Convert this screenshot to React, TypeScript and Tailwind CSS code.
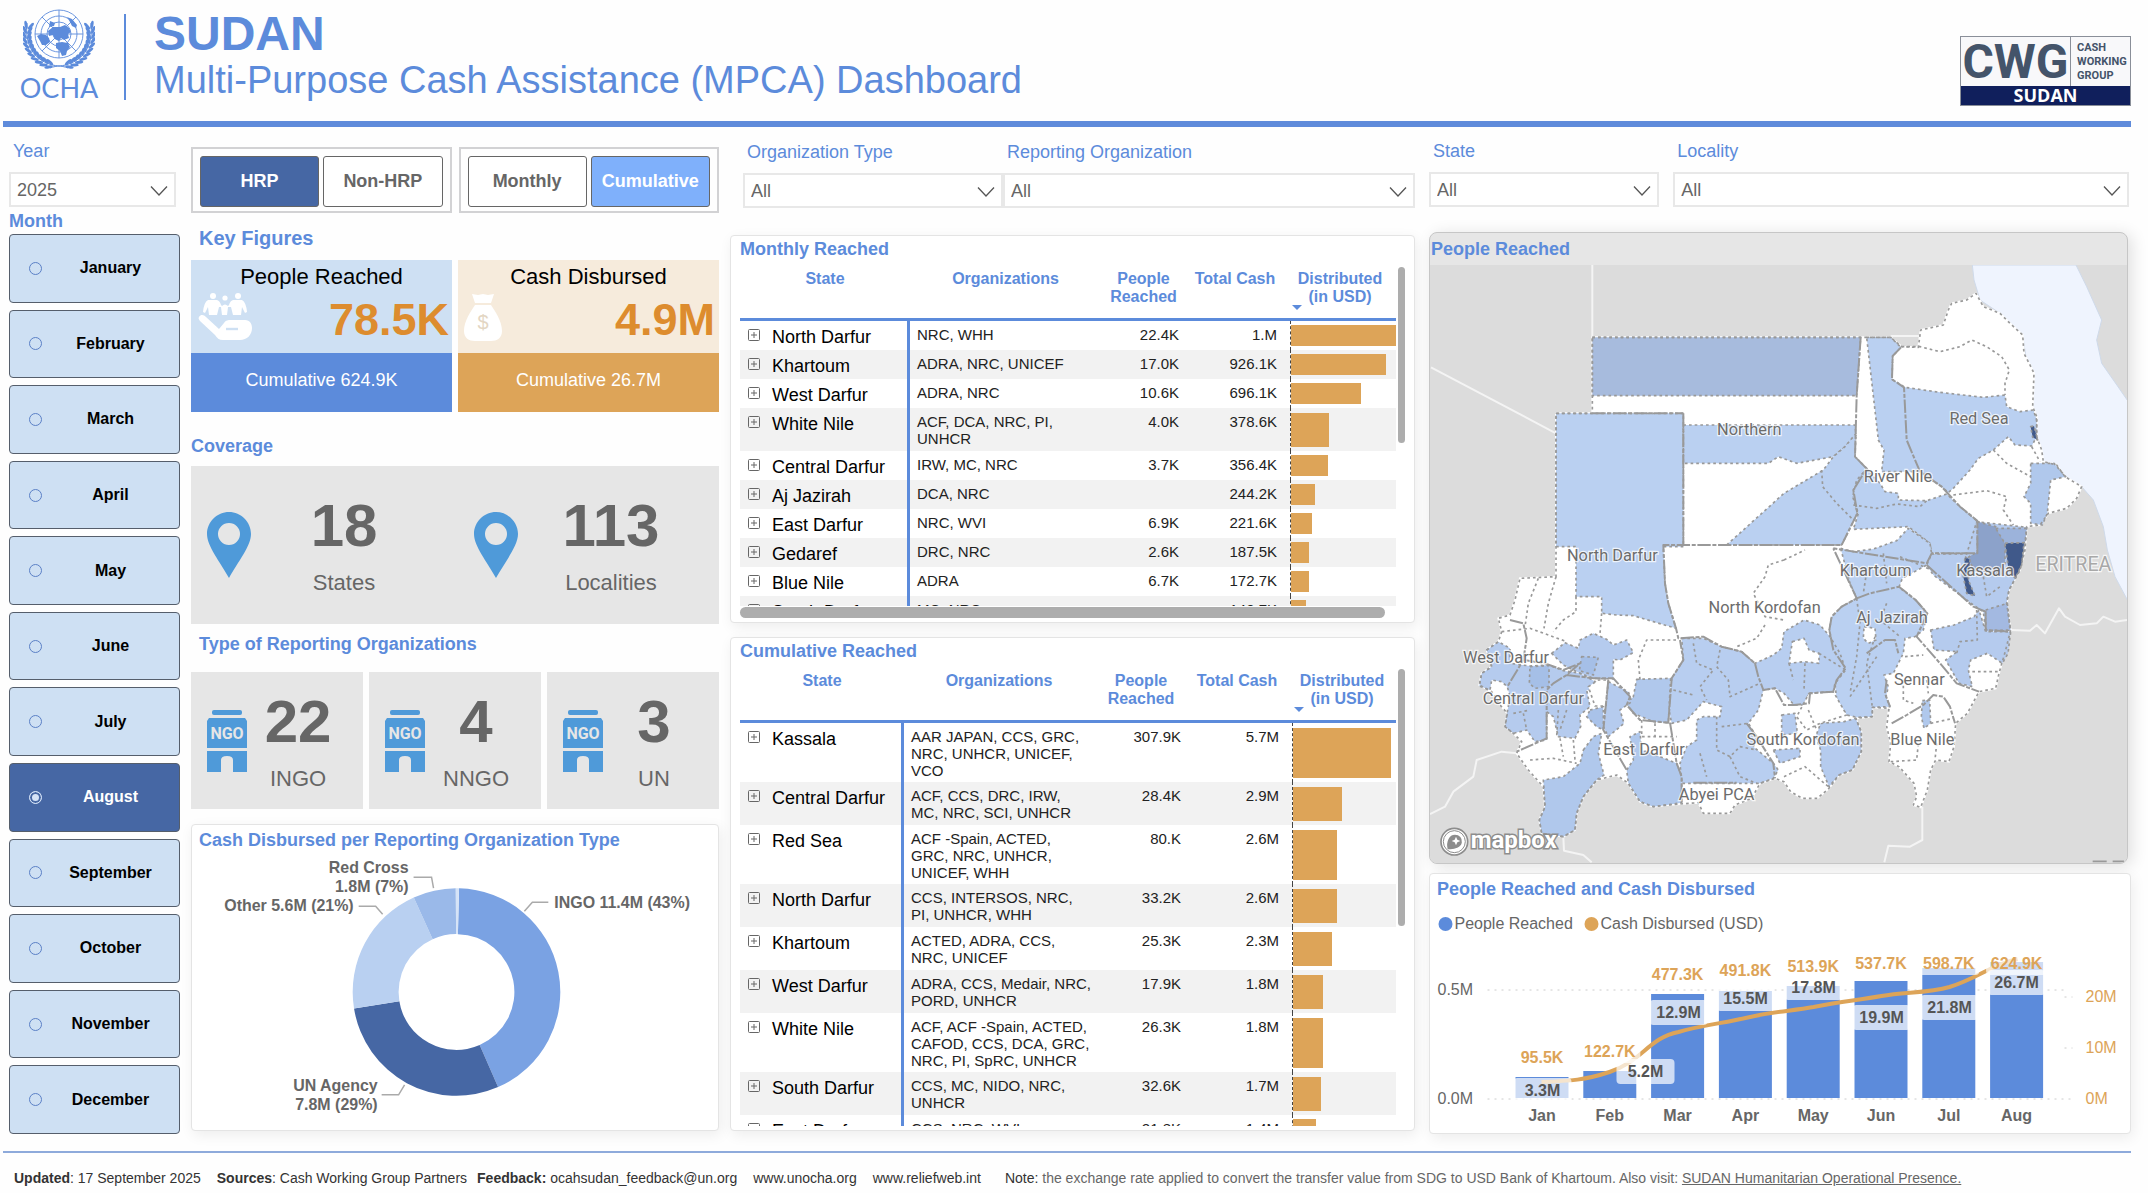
import { useState } from 'react';
import type { ReactNode } from 'react';

const MONTHS = [
    'January', 'February', 'March', 'April', 'May', 'June',
    'July', 'August', 'September', 'October', 'November', 'December',
];

type Row = {
    state: string;
    orgs: string;
    people: string;
    cash: string;
    bar: number;
};

const MONTHLY: Row[] = [
    { state: 'North Darfur', orgs: 'NRC, WHH', people: '22.4K', cash: '1.M', bar: 100 },
    { state: 'Khartoum', orgs: 'ADRA, NRC, UNICEF', people: '17.0K', cash: '926.1K', bar: 90 },
    { state: 'West Darfur', orgs: 'ADRA, NRC', people: '10.6K', cash: '696.1K', bar: 67 },
    { state: 'White Nile', orgs: 'ACF, DCA, NRC, PI,\nUNHCR', people: '4.0K', cash: '378.6K', bar: 36 },
    { state: 'Central Darfur', orgs: 'IRW, MC, NRC', people: '3.7K', cash: '356.4K', bar: 35 },
    { state: 'Aj Jazirah', orgs: 'DCA, NRC', people: '', cash: '244.2K', bar: 23 },
    { state: 'East Darfur', orgs: 'NRC, WVI', people: '6.9K', cash: '221.6K', bar: 20 },
    { state: 'Gedaref', orgs: 'DRC, NRC', people: '2.6K', cash: '187.5K', bar: 17 },
    { state: 'Blue Nile', orgs: 'ADRA', people: '6.7K', cash: '172.7K', bar: 17 },
    { state: 'South Darfur', orgs: 'MC, NRC', people: '', cash: '140.7K', bar: 14 },
];

const CUMULATIVE: Row[] = [
    { state: 'Kassala', orgs: 'AAR JAPAN, CCS, GRC,\nNRC, UNHCR, UNICEF,\nVCO', people: '307.9K', cash: '5.7M', bar: 93 },
    { state: 'Central Darfur', orgs: 'ACF, CCS, DRC, IRW,\nMC, NRC, SCI, UNHCR', people: '28.4K', cash: '2.9M', bar: 47 },
    { state: 'Red Sea', orgs: 'ACF -Spain, ACTED,\nGRC, NRC, UNHCR,\nUNICEF, WHH', people: '80.K', cash: '2.6M', bar: 42 },
    { state: 'North Darfur', orgs: 'CCS, INTERSOS, NRC,\nPI, UNHCR, WHH', people: '33.2K', cash: '2.6M', bar: 42 },
    { state: 'Khartoum', orgs: 'ACTED, ADRA, CCS,\nNRC, UNICEF', people: '25.3K', cash: '2.3M', bar: 37 },
    { state: 'West Darfur', orgs: 'ADRA, CCS, Medair, NRC,\nPORD, UNHCR', people: '17.9K', cash: '1.8M', bar: 29 },
    { state: 'White Nile', orgs: 'ACF, ACF -Spain, ACTED,\nCAFOD, CCS, DCA, GRC,\nNRC, PI, SpRC, UNHCR', people: '26.3K', cash: '1.8M', bar: 29 },
    { state: 'South Darfur', orgs: 'CCS, MC, NIDO, NRC,\nUNHCR', people: '32.6K', cash: '1.7M', bar: 27 },
    { state: 'East Darfur', orgs: 'CCS, NRC, WVI', people: '21.8K', cash: '1.4M', bar: 22 },
];

// Logos

function UnEmblem() {
    const leaves = [];
    for (let i = 0; i < 11; i++) {
        const deg = 108 + i * 9;
        const a = (deg * Math.PI) / 180;
        const x = 36 + 32 * Math.cos(a);
        const y = 26 + 31 * Math.sin(a);
        leaves.push({ x, y, r: deg + 90 });
    }
    const branch = (
        <g>
            <path d="M45 59 C38 56 32 58 24 54 C9 48 2 34 4 14" fill="none" stroke="#5c8bdb" strokeWidth="1" />
            {leaves.map((l) => (
                <g key={l.r} transform={`translate(${l.x} ${l.y}) rotate(${l.r})`}>
                    <ellipse cx="1" cy="-2.4" rx="4.2" ry="1.5" transform="rotate(-28)" fill="#5c8bdb" />
                    <ellipse cx="1" cy="2.2" rx="4.2" ry="1.5" transform="rotate(24)" fill="#5c8bdb" />
                </g>
            ))}
        </g>
    );
    return (
        <svg viewBox="0 0 72 61" className="h-[61px] w-[72px]" aria-hidden="true">
            {branch}
            <g transform="translate(72 0) scale(-1 1)">{branch}</g>
            <circle cx="36" cy="25" r="25" fill="#fff" />
            <g fill="none" stroke="#5c8bdb" strokeWidth=".9">
                <circle cx="36" cy="25" r="24" />
                <circle cx="36" cy="25" r="18" />
                <circle cx="36" cy="25" r="12" />
                <circle cx="36" cy="25" r="6" />
                <path d="M36 1V49M12 25H60M19 8L53 42M53 8L19 42" />
            </g>
            <g fill="#5c8bdb">
                <path d="M25 22l5-4 7 0 5 -2 4 3 2 4-3 2 1 4-5 2-3-2-2 3-4-2-2-4-4 1z" />
                <path d="M44 8l5 2 5 6-1 3-4-2-2-4z" />
                <path d="M14 27l4-2 5 1 3 3 1 4-4 3-4 0-2-4z" />
                <path d="M33 34l6-1 6 1 2 4-3 4-1 4-4 1-2-5-4-3z" />
                <path d="M27 12l5 2-1 3-5 1z" />
            </g>
        </svg>
    );
}

function CwgLogo() {
    return (
        <div className="w-[171px] border border-[#8a8f99] bg-[#f8f8fa] text-[#44546a]">
            <div className="flex h-[49px]">
                <span className="flex w-[110px] shrink-0 items-center justify-center border-r border-[#8a8f99] font-['Roboto',sans-serif] text-[48px] leading-[49px] font-bold">
                    CWG
                </span>
                <span className="flex flex-col justify-center pl-[6px] font-['Roboto',sans-serif] text-[11px] leading-[14px] font-bold">
                    <span>CASH</span>
                    <span>WORKING</span>
                    <span>GROUP</span>
                </span>
            </div>
            <div className="h-[19px] bg-[#101f5c] text-center font-['Open_Sans',sans-serif] text-[18px] leading-[19px] font-bold text-white">
                SUDAN
            </div>
        </div>
    );
}

// Small pictograms

function PeopleInHand() {
    return (
        <svg viewBox="0 0 54 48" className="h-12 w-[54px]" fill="#fff" aria-hidden="true">
            <circle cx="15" cy="3" r="3" />
            <circle cx="27" cy="5" r="2.6" />
            <circle cx="40" cy="3" r="3" />
            <path d="M11 7h8q3 1 4 5l1 1q3-3 6 0l1-1q1-4 4-5h9q4 2 5 12l-2 1-3-6-1 8h-8l-2-8-3 0-1 8h-5l-1-8-2 0-2 8h-8l-1-8-3 6-2-1q1-10 5-12z" />
            <path d="M1 24c2-3 5-2 7 0l13 12 5-6c2-3 4-3 7-3h14c5 0 7 4 7 8 0 7-5 12-12 12H25c-4 0-6-2-8-5L2 28c-1-1-2-3-1-4z" />
            <path d="M28 36h12" stroke="#cee0f3" strokeWidth="2.4" />
        </svg>
    );
}

function MoneyBag() {
    return (
        <svg viewBox="0 0 38 48" className="h-12 w-[38px]" fill="#fff" aria-hidden="true">
            <path d="M8 1l6 1 5-1 5 1 6-1-3 9H11z" />
            <path d="M11 12h16c4 6 11 16 11 26 0 7-5 10-11 10H11C5 48 0 45 0 38c0-10 7-20 11-26z" />
            <text x="19" y="36" textAnchor="middle" fontSize="20" fontFamily="Liberation Sans" fill="#e3d6c3">$</text>
        </svg>
    );
}

function Pin() {
    return (
        <svg viewBox="0 0 44 66" className="mt-[46px] h-[66px] w-11 shrink-0" aria-hidden="true">
            <path
                fillRule="evenodd"
                fill="#4f9ad9"
                d="M22 0C34 0 44 10 44 22c0 12-13 28-22 44C13 50 0 34 0 22 0 10 10 0 22 0zM22 11a11 11 0 1 0 0 22 11 11 0 0 0 0-22z"
            />
        </svg>
    );
}

function NgoBuilding() {
    return (
        <svg viewBox="0 0 40 62" className="mt-[38px] h-[62px] w-10 shrink-0" fill="#4f9ad9" aria-hidden="true">
            <rect x="5" y="0" width="30" height="5" rx="2" />
            <path d="M2 8h36l2 3v27H0V11z" />
            <path d="M0 41h40v21H26V50q0-4-6-4t-6 4v12H0z" />
            <text x="20" y="29" textAnchor="middle" fontSize="16" fontWeight="700" fontFamily="Roboto, sans-serif" fill="#e6e6e6">
                NGO
            </text>
        </svg>
    );
}

// Filters

function Dropdown({ id, label, value }: { id: string; label: string; value: string }) {
    return (
        <div className="min-w-0">
            <label htmlFor={id} className="block pl-1 text-[18px] leading-5 text-[#5c8bdb]">{label}</label>
            <div className="relative mt-[11px]">
                <select
                    id={id}
                    defaultValue={value}
                    className="block h-[35px] w-full appearance-none border-2 border-[#e8e8e8] bg-white pt-[2px] pl-[6px] text-[18px] text-[#666]"
                >
                    <option>{value}</option>
                </select>
                <svg viewBox="0 0 18 10" className="pointer-events-none absolute top-[14px] right-2 h-[10px] w-[18px]" fill="none" stroke="#555" strokeWidth="1.3">
                    <path d="M1 0.5L9 9L17 0.5" />
                </svg>
            </div>
        </div>
    );
}

function Toggle({ children, tone, onClick }: { children: ReactNode; tone: 'navy' | 'sky' | 'off'; onClick: () => void }) {
    const tones = {
        navy: 'bg-[#4667a4] text-white',
        sky: 'bg-[#7fb0fb] text-white',
        off: 'bg-white text-[#666]',
    };
    return (
        <button
            onClick={onClick}
            className={`h-[51px] min-w-0 flex-1 rounded-[3px] border border-[#666] text-[18px] font-bold ${tones[tone]}`}
        >
            {children}
        </button>
    );
}

function Panel({ children, className }: { children: ReactNode; className: string }) {
    return (
        <section className={`rounded-[4px] border border-[#e4e4e4] bg-white shadow-[2px_4px_14px_rgba(0,0,0,0.07)] ${className}`}>
            {children}
        </section>
    );
}

// Tables

const ROW_HEIGHTS = ['', 'h-[29px]', 'h-[43px]', 'h-[59px]'];
const BAR_HEIGHTS = ['', 'h-[21px]', 'h-[34px]', 'h-[50px]'];

function ReachTable({ rows, stateWidth, orgWidth, peopleWidth }: { rows: Row[]; stateWidth: string; orgWidth: string; peopleWidth: string }) {
    const th = 'h-[62px] border-b-[3px] border-[#5c8bdb] pt-[11px] align-top font-bold';
    return (
        <table className="w-full table-fixed border-separate border-spacing-0 text-[15px] leading-[17px] text-[#222]">
            <thead className="text-[16px] leading-[18px] text-[#5c8bdb]">
                <tr>
                    <th className={`${th} ${stateWidth}`}>State</th>
                    <th className={`${th} ${orgWidth}`}>Organizations</th>
                    <th className={`${th} ${peopleWidth}`}>People Reached</th>
                    <th className={`${th} w-[98px]`}>Total Cash</th>
                    <th className={`${th} relative w-[112px]`}>
                        Distributed<br />(in USD)
                        <svg viewBox="0 0 10 5" className="absolute bottom-2 left-2 h-[5px] w-[10px]" fill="#5c8bdb">
                            <path d="M0 0h10L5 5z" />
                        </svg>
                    </th>
                </tr>
            </thead>
            <tbody>
                {rows.map((row) => {
                    const lines = row.orgs.split('\n').length;
                    return (
                        <tr key={row.state} className="align-top even:bg-[#f2f2f2]">
                            <td className="border-r-[3px] border-[#5c8bdb]">
                                <div className="flex pl-2">
                                    <button aria-label={`Expand ${row.state}`} className="mt-2 h-3 w-3">
                                        <svg viewBox="0 0 12 12" className="h-3 w-3" fill="none" stroke="#666">
                                            <rect x=".5" y=".5" width="11" height="11" rx="1" />
                                            <path d="M3 6H9M6 3V9" />
                                        </svg>
                                    </button>
                                    <span className="pt-[6px] pl-3 text-[18px] leading-5 whitespace-nowrap text-black">{row.state}</span>
                                </div>
                            </td>
                            <td className="pt-[5px] pl-[7px] whitespace-pre">{row.orgs}</td>
                            <td className="pt-[5px] pr-[7px] text-right">{row.people}</td>
                            <td className="pt-[5px] pr-[7px] text-right">{row.cash}</td>
                            <td className="pl-[6px]">
                                <div className={`flex items-center border-l border-dashed border-[#444] ${ROW_HEIGHTS[lines]}`}>
                                    <div className={`bg-[#dda458] ${BAR_HEIGHTS[lines]}`} style={{ width: `${row.bar}%` }} />
                                </div>
                            </td>
                        </tr>
                    );
                })}
            </tbody>
        </table>
    );
}

// Donut

const DONUT = [
    { from: 1.4, to: 156.4, color: '#7aa2e3' },
    { from: 156.4, to: 260.8, color: '#4667a4' },
    { from: 260.8, to: 335.7, color: '#b9d0f1' },
    { from: 335.7, to: 359.6, color: '#9ab9e9' },
    { from: -0.4, to: 1.4, color: '#d5e3f7' },
];

function slicePath(from: number, to: number) {
    const pt = (r: number, deg: number) => {
        const a = ((deg - 90) * Math.PI) / 180;
        return `${265 + r * Math.cos(a)} ${140 + r * Math.sin(a)}`;
    };
    const large = to - from > 180 ? 1 : 0;
    return `M${pt(104, from)}A104 104 0 ${large} 1 ${pt(104, to)}L${pt(58, to)}A58 58 0 ${large} 0 ${pt(58, from)}Z`;
}

function Donut() {
    return (
        <svg viewBox="0 0 527 278" className="h-[278px] w-full" role="img" aria-label="Cash disbursed by organization type">
            {DONUT.map((s) => (
                <path key={s.color} d={slicePath(s.from, s.to)} fill={s.color} />
            ))}
            <g fill="none" stroke="#aaa" strokeWidth="1.5">
                <path d="M222 25H240L242 36" />
                <path d="M167 54H184L191 62" />
                <path d="M333 59L341 50H357" />
                <path d="M190 243H207L213 233" />
            </g>
            <g fontSize="16" fontWeight="700" fill="#666">
                <text x="217" y="21" textAnchor="end">Red Cross</text>
                <text x="217" y="40" textAnchor="end">1.8M (7%)</text>
                <text x="162" y="59" textAnchor="end">Other 5.6M (21%)</text>
                <text x="363" y="56">INGO 11.4M (43%)</text>
                <text x="186" y="239" textAnchor="end">UN Agency</text>
                <text x="186" y="258" textAnchor="end">7.8M (29%)</text>
            </g>
        </svg>
    );
}

// Map of states and localities

const SUDAN_OUTLINE =
    'M517 262H1412L1445 290L1495 292L1502 240L1570 225L1585 180L1595 160L1640 150L1668 130L1690 170L1740 190L1770 220L1808 255L1812 310L1835 355L1842 370L1838 470L1850 500L1850 560L1865 600L1870 635L1910 645L1935 680L1985 710L1970 745L1940 775L1885 790L1860 825L1820 830L1815 900L1800 960L1767 1020L1760 1060L1772 1140L1757 1200L1737 1270L1727 1315L1677 1325L1642 1390L1607 1420L1602 1490L1587 1535L1547 1530L1532 1560L1522 1620L1502 1672L1480 1665L1490 1640L1482 1600L1437 1550L1407 1535L1412 1480L1400 1430L1407 1375L1357 1372L1357 1400L1307 1405L1324 1445L1324 1505L1297 1560L1257 1575L1227 1615L1192 1645L1147 1645L1112 1625L1092 1595L1065 1585L1020 1600L995 1645L945 1665L930 1690L850 1690L835 1658L740 1665L700 1670L660 1655L625 1600L590 1575L530 1590L490 1640L470 1690L465 1740L430 1760L365 1750L358 1710L375 1670L370 1610L325 1560L290 1510L305 1475L280 1450L255 1430L262 1390L240 1365L215 1325L178 1305L185 1270L215 1250L200 1200L235 1175L245 1145L235 1105L270 1095L285 1050L300 985L408 980V490H517Z';

const REGIONS = [
    { fill: '#a7bbdd', d: 'M517 262H1322L1310 437H517Z' },
    { fill: '#bad0f1', d: 'M408 490H790V890H730L735 1000L745 1060L768 1135L700 1115L640 1097L590 1095L545 1090V1040H468V890H408Z' },
    { fill: '#bad0f1', d: 'M790 525H1305L1308 555L1275 590L1240 620L1130 640L1075 620L1045 640H790Z' },
    { fill: '#bad0f1', d: 'M920 885L1092 730L1210 660L1240 620L1275 590L1308 550L1305 620L1340 655L1310 700L1300 740L1312 790L1265 885Z' },
    { fill: '#bad0f1', d: 'M1340 262H1412L1443 292L1418 318L1416 388L1455 412L1560 427L1690 442L1755 435L1760 470L1800 485L1840 480L1850 510L1850 560L1835 588L1785 585L1765 560L1720 600L1675 625L1650 660L1600 715L1585 728L1565 710L1500 665H1385L1392 600L1375 570Z' },
    { fill: '#bad0f1', d: 'M1340 656L1380 700L1395 725L1435 730V750L1520 752L1580 732L1620 770L1670 812V910H1535L1530 880L1465 830L1300 838L1315 790L1298 740L1310 690Z' },
    { fill: '#bad0f1', d: 'M1262 895L1300 905L1360 897L1430 872L1465 835L1530 880L1535 912L1520 945L1447 985L1437 1012L1487 1050L1522 1090L1510 1140L1485 1160L1455 1165L1450 1210L1420 1270L1392 1275L1405 1310L1398 1340L1410 1370L1357 1372V1400L1310 1402L1280 1395L1250 1350L1245 1300L1275 1255L1240 1200L1228 1140L1235 1100L1265 1070L1310 1045L1290 1000Z' },
    { fill: '#b5cbee', d: 'M1535 912H1640L1670 815L1820 832L1812 900L1800 960L1767 1020L1760 1060L1772 1140L1697 1145L1690 1085L1660 1065L1600 1020L1540 975L1520 945Z' },
    { fill: '#b5cbee', d: 'M1532 1140L1602 1125L1662 1100L1677 1080L1697 1145H1772L1764 1210L1747 1240L1702 1210L1652 1230L1645 1260L1657 1310L1617 1300L1577 1230L1612 1205L1542 1200Z' },
    { fill: '#b8cef0', d: 'M785 1165L850 1165L905 1190L965 1205L1005 1240L1060 1215L1085 1195L1092 1145L1152 1110L1200 1125L1230 1160L1260 1210L1277 1260L1245 1300L1240 1325L1167 1330L1152 1365L1122 1365L1092 1330L1065 1315L1030 1320L1015 1380L985 1420L1010 1460L1000 1490L1060 1540L1075 1560L1060 1585L1020 1600H785L780 1540L800 1490L830 1470V1410L850 1400L900 1400L905 1370L850 1355L800 1410L755 1420L745 1370L755 1285L790 1230Z' },
    { fill: '#b5cbee', d: 'M1202 1420L1272 1415L1307 1405L1324 1445V1505L1297 1560L1257 1575L1227 1610L1202 1550V1500L1187 1460Z' },
    { fill: '#b5cbee', d: 'M1085 1395L1125 1390L1132 1450L1085 1455Z' },
    { fill: '#b5cbee', d: 'M1060 1500L1140 1495V1520L1080 1540Z' },
    { fill: '#b0c8ec', d: 'M650 1288L752 1285L745 1418L700 1415L640 1390L620 1360L640 1340Z' },
    { fill: '#b0c8ec', d: 'M620 1560L640 1530L630 1460L660 1445L665 1500L720 1520L770 1540L785 1580V1658L740 1665L700 1670L660 1655L625 1600Z' },
    { fill: '#b5cbee', d: 'M565 1295L625 1325L635 1355L600 1380L612 1420L565 1460L550 1430L555 1370Z' },
    { fill: '#a9c2e9', d: 'M510 1380L550 1370V1440L530 1430L500 1400Z' },
    { fill: '#b0c8ec', d: 'M490 1500L520 1460L545 1450L535 1510L552 1575L530 1590L490 1640L470 1690L465 1740L430 1760L365 1750L358 1710L375 1670L370 1590L430 1580L480 1540Z' },
    { fill: '#b5cbee', d: 'M395 1210L435 1178L475 1195L480 1170L520 1150L560 1168L580 1185L620 1170L640 1208L600 1230L580 1228V1287L520 1285L480 1270L430 1245Z' },
    { fill: '#b5cbee', d: 'M200 1200L235 1175L270 1195V1240L330 1248L385 1245L430 1262L480 1270L535 1300L530 1320L500 1320L510 1370L480 1395L482 1430L465 1465L415 1460L400 1400L380 1385V1470L345 1475L320 1440L280 1450L255 1430L262 1385L270 1340L262 1310L245 1295L215 1290L210 1320L178 1308L185 1270L215 1250Z' },
    { fill: '#a5bfe7', d: 'M330 1250L387 1247V1310L345 1315L328 1300Z' },
    { fill: '#a5bfe7', d: 'M485 1220L535 1222L520 1275L478 1262Z' },
    { fill: '#8ca2ca', d: 'M1672 815L1727 830L1755 880V940L1745 975L1665 960L1640 925L1672 905Z' },
    { fill: '#9cb3db', d: 'M1727 835H1820L1815 878L1755 880Z' },
    { fill: '#40598a', d: 'M1755 880L1812 878L1805 945L1785 985L1765 955Z' },
    { fill: '#40598a', d: 'M1635 920L1650 930L1645 990L1665 1038L1640 1030L1630 980Z' },
    { fill: '#a3b9e1', d: 'M1697 1080L1762 1060L1770 1140L1698 1142Z' },
    { fill: '#40598a', d: 'M1832 530L1842 528L1853 570L1838 562Z' },
    { fill: '#b0c8ec', d: 'M1832 640H1902L1937 680L1892 690L1882 790L1867 825L1832 820V760L1812 740L1832 700Z' },
    { fill: '#b0c8ec', d: 'M1507 1352L1529 1350L1532 1420L1512 1435L1504 1400Z' },
    // localities with no reported reach
    { fill: '#fff', d: 'M1332 1130L1365 1135L1368 1170L1345 1180L1330 1165Z' },
    { fill: '#fff', d: 'M1117 1175L1152 1165L1167 1200L1197 1210V1240L1152 1235L1107 1240Z' },
    { fill: '#fff', d: 'M1167 1330L1240 1325L1280 1395L1200 1420L1160 1440L1130 1400Z' },
    { fill: '#fff', d: 'M505 1310L535 1290H565L558 1368H525Z' },
];

const STATE_BORDERS = [
    'M1322 262L1310 437L1305 620L1340 656L1300 720L1312 790L1265 885H730L735 1000L745 1060L768 1135L775 1165L850 1160L905 1190L965 1205L1005 1240L1015 1280L1030 1320L1065 1315L1092 1365L1122 1365L1167 1360L1170 1330L1240 1325L1250 1290L1277 1255L1240 1200L1228 1140L1235 1100L1265 1070L1310 1045L1240 895',
    'M790 490V885M517 490H790',
    'M1443 292L1418 318L1416 388L1452 412L1460 570L1500 665L1565 710L1620 770L1672 812V910H1535L1520 940L1240 895M1520 945L1660 1070L1697 1085V1140L1772 1145',
    'M1310 1045L1350 1030L1437 1010L1487 1050L1522 1090L1490 1160L1560 1240L1610 1300L1677 1325M1340 1210L1395 1170L1425 1170L1435 1210',
    'M1415 1420L1460 1395L1510 1365L1540 1335L1570 1340L1590 1370L1605 1420M1400 1290L1395 1330L1410 1370',
    'M270 1110L310 1120L320 1165L310 1230L262 1310M310 1230L375 1240L430 1260L480 1240L440 1275L400 1300L380 1320V1465L290 1505M440 1275L520 1285H580L630 1340L620 1365L660 1410L745 1418L755 1285L790 1230L780 1170M565 1290L550 1440L620 1560M750 1418L770 1540L785 1580V1658',
    'M980 1420L1010 1460L1060 1540L1065 1585M820 1598H950',
];

const LOCALITY_LINES = [
    'M1445 290L1500 290L1560 305L1620 290L1655 270L1700 290L1745 320L1768 360L1755 400V435',
    'M1720 600L1760 640L1832 680M1600 735L1700 722L1760 740L1750 780L1780 825M1835 590L1860 635',
    'M1205 660L1208 710L1250 760L1300 810M1300 765L1370 775L1430 762L1500 770L1520 752',
    'M355 985L325 1060L315 1130M408 980L385 1060L372 1135M468 1040V1085L430 1110L400 1145M245 1145L330 1135L440 1175',
    'M545 1090L540 1150M768 1170H680L655 1230L660 1290M665 1410V1460H770M705 1420V1460',
    'M1092 930L1045 945L1035 980L1000 1030L1035 1100L1092 1110M1092 930L1155 900M1035 1125L1010 1165L950 1190',
    'M820 1180L830 1240L880 1260L840 1310L860 1350M900 1200L890 1250L925 1290L930 1340L1020 1300M760 1320L820 1335',
    'M890 1400V1500L930 1520L960 1490L1010 1500M905 1430L985 1420M840 1510L860 1580M930 1520L960 1580L1010 1600',
    'M1155 1240L1152 1320M1107 1240L1120 1290M1197 1210L1277 1260M1165 1380L1190 1440M1092 1580L1155 1550L1225 1610',
    'M1310 1045L1320 1120L1310 1220L1290 1330M1365 1160L1340 1240L1357 1372M1370 1220L1290 1340M1400 1060L1380 1110L1440 1160',
    'M1290 960L1340 965L1330 1030M1390 910L1400 1000M1440 920L1535 960M1455 1220L1510 1215M1450 1290V1350L1480 1360M1520 1290L1525 1330',
    'M1670 1080L1672 1170L1620 1175L1610 1210M1657 1265L1737 1265M1690 980L1700 1040L1740 1010M1532 1420L1600 1405M1412 1535L1490 1530L1495 1480M1550 1480L1545 1530',
    'M330 1530L400 1525L470 1540M420 1465L430 1520M460 1470L465 1530M280 1390L330 1380M310 1390L320 1440M415 1380L410 1460M440 1380L420 1440',
];

const MAP_LABELS = [
    { x: 988, y: 554, name: 'Northern' },
    { x: 1677, y: 522, name: 'Red Sea' },
    { x: 1434, y: 696, name: 'River Nile' },
    { x: 577, y: 934, name: 'North Darfur' },
    { x: 1367, y: 977, name: 'Khartoum' },
    { x: 1695, y: 979, name: 'Kassala' },
    { x: 1034, y: 1089, name: 'North Kordofan' },
    { x: 1416, y: 1119, name: 'Aj Jazirah' },
    { x: 258, y: 1238, name: 'West Darfur' },
    { x: 340, y: 1361, name: 'Central Darfur' },
    { x: 1498, y: 1305, name: 'Sennar' },
    { x: 672, y: 1515, name: 'East Darfur' },
    { x: 1149, y: 1484, name: 'South Kordofan' },
    { x: 1507, y: 1484, name: 'Blue Nile' },
    { x: 890, y: 1650, name: 'Abyei PCA' },
];

function SudanMap() {
    return (
        <svg viewBox="30 45 2091 1794" preserveAspectRatio="xMidYMid slice" className="block h-[598px] w-full" role="img" aria-label="Map of people reached">
            <rect x="0" y="0" width="2200" height="1900" fill="#dcdcdc" />
            <path
                d="M1657 45L1662 90L1680 150L1740 190L1808 255L1840 470L1850 560L1870 640L1985 710L2020 750L2050 830L2062 900L2085 980L2125 1055V455L2080 390L2045 340L2030 270L2045 210L2000 110L1968 45Z"
                fill="#eff4fe"
                stroke="#cfdaea"
                strokeWidth="3"
            />
            <g fill="none" stroke="#f4f4f4" strokeWidth="6" strokeLinejoin="round">
                <path d="M517 45V262M33 352L408 550M1412 258H1500" />
                <path d="M30 1692L75 1670L100 1625L160 1580L170 1530L245 1505L290 1510" />
                <path d="M430 1762L432 1802L490 1815L515 1837" />
                <path d="M1507 1670V1770L1470 1790L1405 1787L1393 1837" />
                <path d="M1772 1140L1830 1142L1850 1125L1875 1150L1917 1075L1935 1100L1980 1125L2030 1120L2050 1100L2085 1115L2121 1110" />
            </g>
            <path d={SUDAN_OUTLINE} fill="#fff" stroke="#fff" strokeWidth="6" />
            <g stroke="#999" strokeWidth="5" strokeDasharray="8 9" strokeLinejoin="round">
                {REGIONS.map((r) => (
                    <path key={r.d} d={r.d} fill={r.fill} />
                ))}
                <path d={SUDAN_OUTLINE} fill="none" />
                {LOCALITY_LINES.map((d) => (
                    <path key={d} d={d} fill="none" />
                ))}
            </g>
            <g fill="none" stroke="#999" strokeWidth="6" strokeLinejoin="round">
                {STATE_BORDERS.map((d) => (
                    <path key={d} d={d} strokeDasharray="40 5 12 5" />
                ))}
            </g>
            <g fontFamily="Roboto, sans-serif" fontSize="49" textAnchor="middle" fill="#6c6c6c" stroke="#fff" strokeOpacity=".75" strokeWidth="7" paintOrder="stroke">
                {MAP_LABELS.map((l) => (
                    <text key={l.name} x={l.x} y={l.y}>{l.name}</text>
                ))}
                <text x="1960" y="964" fontSize="59" fill="#a8a8a8">ERITREA</text>
            </g>
            <g stroke="#8d8d8d" strokeWidth="5">
                <circle cx="103" cy="1775" r="40" fill="#fff" />
                <circle cx="103" cy="1775" r="33" fill="#fff" strokeWidth="3" />
                <path d="M85 1795c-4-20 4-38 20-38 12 0 20 9 18 20-2 12-18 20-38 18z" fill="#8d8d8d" />
                <path d="M108 1760l4 9 9 4-9 4-4 9-4-9-9-4 9-4z" fill="#fff" stroke="none" />
                <text x="152" y="1793" fontFamily="Roboto, sans-serif" fontSize="72" fontWeight="700" fill="#fff" strokeWidth="9" paintOrder="stroke">
                    mapbox
                </text>
            </g>
            <path d="M2018 1834H2060M2078 1834H2112" stroke="#999" strokeWidth="5" />
        </svg>
    );
}

// Combined chart; y values are in the chart's own units

const CHART = [
    { month: 'Jan', top: 204, people: '95.5K', peopleY: 184, cash: '3.3M', cashX: 112, cashY: 217 },
    { month: 'Feb', top: 198, people: '122.7K', peopleY: 178, cash: '5.2M', cashX: 215, cashY: 198 },
    { month: 'Mar', top: 121, people: '477.3K', peopleY: 101, cash: '12.9M', cashX: 248, cashY: 139 },
    { month: 'Apr', top: 118, people: '491.8K', peopleY: 97, cash: '15.5M', cashX: 315, cashY: 125 },
    { month: 'May', top: 113, people: '513.9K', peopleY: 93, cash: '17.8M', cashX: 383, cashY: 114 },
    { month: 'Jun', top: 108, people: '537.7K', peopleY: 90, cash: '19.9M', cashX: 451, cashY: 144 },
    { month: 'Jul', top: 95, people: '598.7K', peopleY: 90, cash: '21.8M', cashX: 519, cashY: 134 },
    { month: 'Aug', top: 89, people: '624.9K', peopleY: 90, cash: '26.7M', cashX: 586, cashY: 109 },
];

function ComboChart() {
    return (
        <svg viewBox="0 36 699 220" className="block h-[220px] w-full" fontSize="16" role="img" aria-label="People reached and cash disbursed by month">
            <g fill="#666">
                <circle cx="15" cy="51" r="7" fill="#5c8bdb" />
                <text x="24" y="56">People Reached</text>
                <circle cx="161" cy="51" r="7" fill="#dda458" />
                <text x="170" y="56">Cash Disbursed (USD)</text>
                <text x="7" y="122">0.5M</text>
                <text x="7" y="231">0.0M</text>
            </g>
            <g fill="#dda458">
                <text x="655" y="129">20M</text>
                <text x="655" y="180">10M</text>
                <text x="655" y="231">0M</text>
            </g>
            <path d="M57 117H634M57 226H642M634 124H642M634 175H642" stroke="#ccc" strokeDasharray="2 5" />
            {CHART.map((c, i) => (
                <rect key={c.month} x={85 + i * 67.8} y={c.top} width="53" height={225 - c.top} fill="#5c8bdb" />
            ))}
            <path
                d="M111 209C140 208 155 207 179 199C212 188 218 165 248 159C272 152 294 150 315 145C340 139 360 138 383 134C408 129 428 127 451 123C475 119 498 120 519 114C548 105 560 92 587 86"
                fill="none"
                stroke="#dda458"
                strokeWidth="4"
            />
            {CHART.map((c, i) => (
                <g key={c.month} fontWeight="700" textAnchor="middle">
                    <rect x={81 + i * 67.8} y={c.peopleY - 12} width="61" height="24" rx="4" fill="#fff" fillOpacity=".7" />
                    <rect x={c.cashX - 29} y={c.cashY - 12} width="58" height="25" rx="4" fill="#fff" fillOpacity=".7" />
                    <text x={111.5 + i * 67.8} y={c.peopleY + 6} fill="#dda458">{c.people}</text>
                    <text x={c.cashX} y={c.cashY + 6} fill="#555">{c.cash}</text>
                    <text x={111.5 + i * 67.8} y="248" fill="#666">{c.month}</text>
                </g>
            ))}
        </svg>
    );
}

export default function App() {
    const [month, setMonth] = useState('August');
    const [plan, setPlan] = useState('HRP');
    const [mode, setMode] = useState('Cumulative');

    return (
        <div className="flex min-h-screen flex-col overflow-x-hidden bg-[#fefefe] pl-[3px] font-['Liberation_Sans',Arial,sans-serif]">
            <header className="mr-[17px] flex h-[127px] items-start border-b-[6px] border-[#5f8bdb] text-[#5c8bdb]">
                <div className="ml-[17px] flex w-[78px] flex-col items-center pt-[9px]">
                    <UnEmblem />
                    <span className="mt-[4px] font-['Lato',sans-serif] text-[27px] leading-7">OCHA</span>
                </div>
                <div className="mt-[14px] ml-[26px] h-[86px] w-[2px] bg-[#5c8bdb]" />
                <div className="ml-[28px] pt-[10px]">
                    <h1 className="text-[48px] leading-[48px] font-bold">SUDAN</h1>
                    <p className="text-[38px] leading-11">Multi-Purpose Cash Assistance (MPCA) Dashboard</p>
                </div>
                <div className="mt-[36px] ml-auto">
                    <CwgLogo />
                </div>
            </header>

            <main className="mr-[17px] ml-[6px] grid flex-1 grid-cols-[171px_528fr_685fr_705fr] gap-x-[11px] pb-[17px]">
                {/* Year and month */}
                <div className="flex flex-col pt-[14px]">
                    <div className="pr-1">
                        <Dropdown id="year" label="Year" value="2025" />
                    </div>
                    <fieldset className="mt-1 flex flex-1 flex-col">
                        <legend className="text-[18px] leading-5 font-bold text-[#5c8bdb]">Month</legend>
                        <div className="mt-[3px] flex flex-1 flex-col gap-[7px]">
                            {MONTHS.map((m) => (
                                <label
                                    key={m}
                                    className={`flex flex-1 items-center rounded-[4px] border border-[#555e6b] text-[16px] font-bold ${
                                        m === month ? 'bg-[#4667a4] text-white' : 'bg-[#cee0f3] text-black'
                                    }`}
                                >
                                    <input
                                        type="radio"
                                        name="month"
                                        checked={m === month}
                                        onChange={() => setMonth(m)}
                                        className="ml-[19px] h-[13px] w-[13px] appearance-none rounded-full border border-[#5b80c6] checked:border-[#d5e3f7] checked:bg-[#d5e3f7] checked:shadow-[inset_0_0_0_2px_#4667a4]"
                                    />
                                    <span className="flex-1 text-center">{m}</span>
                                </label>
                            ))}
                        </div>
                    </fieldset>
                </div>

                {/* Figures */}
                <div className="min-w-0 pt-5 text-[#666]">
                    <div className="flex gap-[7px]">
                        <div className="flex flex-1 gap-1 border-2 border-[#d2d2d4] px-[7px] pt-[7px] pb-1">
                            <Toggle tone={plan === 'HRP' ? 'navy' : 'off'} onClick={() => setPlan('HRP')}>HRP</Toggle>
                            <Toggle tone={plan === 'Non-HRP' ? 'navy' : 'off'} onClick={() => setPlan('Non-HRP')}>Non-HRP</Toggle>
                        </div>
                        <div className="flex flex-1 gap-1 border-2 border-[#d2d2d4] px-[7px] pt-[7px] pb-1">
                            <Toggle tone={mode === 'Monthly' ? 'sky' : 'off'} onClick={() => setMode('Monthly')}>Monthly</Toggle>
                            <Toggle tone={mode === 'Cumulative' ? 'sky' : 'off'} onClick={() => setMode('Cumulative')}>Cumulative</Toggle>
                        </div>
                    </div>

                    <h2 className="mt-[13px] pl-2 text-[20px] leading-6 font-bold text-[#5c8bdb]">Key Figures</h2>
                    <div className="mt-[10px] grid grid-cols-2 gap-[6px]">
                        <div>
                            <div className="h-[93px] bg-[#cee0f3] pt-[5px]">
                                <h3 className="text-center text-[22px] leading-6 text-black">People Reached</h3>
                                <div className="flex justify-between pr-[3px] pl-[7px]">
                                    <div className="pt-1"><PeopleInHand /></div>
                                    <span className="text-[45px] leading-[62px] font-bold text-[#dd8c2e]">78.5K</span>
                                </div>
                            </div>
                            <p className="h-[59px] bg-[#5c8bdb] text-center text-[18px] leading-[54px] text-white">Cumulative 624.9K</p>
                        </div>
                        <div>
                            <div className="h-[93px] bg-[#f6ebdc] pt-[5px]">
                                <h3 className="text-center text-[22px] leading-6 text-black">Cash Disbursed</h3>
                                <div className="flex justify-between pr-1 pl-[6px]">
                                    <div className="pt-1"><MoneyBag /></div>
                                    <span className="text-[45px] leading-[62px] font-bold text-[#dd8c2e]">4.9M</span>
                                </div>
                            </div>
                            <p className="h-[59px] bg-[#dda458] text-center text-[18px] leading-[54px] text-white">Cumulative 26.7M</p>
                        </div>
                    </div>

                    <h2 className="mt-[22px] text-[18px] leading-6 font-bold text-[#5c8bdb]">Coverage</h2>
                    <div className="mt-2 grid h-[158px] grid-cols-[267fr_261fr] bg-[#e6e6e6]">
                        {[['18', 'States'], ['113', 'Localities']].map(([n, label]) => (
                            <div key={label} className="flex pl-4">
                                <Pin />
                                <div className="w-[186px] pt-[30px] text-center">
                                    <div className="text-[60px] leading-[60px] font-bold">{n}</div>
                                    <div className="mt-[15px] text-[22px] leading-6">{label}</div>
                                </div>
                            </div>
                        ))}
                    </div>

                    <h2 className="mt-2 pl-2 text-[18px] leading-6 font-bold text-[#5c8bdb]">Type of Reporting Organizations</h2>
                    <div className="mt-4 grid grid-cols-3 gap-[6px]">
                        {[['22', 'INGO'], ['4', 'NNGO'], ['3', 'UN']].map(([n, label]) => (
                            <div key={label} className="flex h-[137px] bg-[#e6e6e6] pl-4">
                                <NgoBuilding />
                                <div className="w-[102px] pt-5 text-center">
                                    <div className="text-[60px] leading-[60px] font-bold">{n}</div>
                                    <div className="mt-[15px] text-[22px] leading-6">{label}</div>
                                </div>
                            </div>
                        ))}
                    </div>

                    <Panel className="mt-[15px] h-[307px] pt-[3px]">
                        <h2 className="pl-[7px] text-[18px] leading-6 font-bold text-[#5c8bdb]">Cash Disbursed per Reporting Organization Type</h2>
                        <Donut />
                    </Panel>
                </div>

                {/* Tables */}
                <div className="min-w-0 pt-[15px]">
                    <div className="grid grid-cols-[260fr_412fr] pl-[13px]">
                        <Dropdown id="org-type" label="Organization Type" value="All" />
                        <Dropdown id="org" label="Reporting Organization" value="All" />
                    </div>

                    <Panel className="mt-[27px] h-[388px] pt-[3px] pr-[9px] pl-[9px]">
                        <h2 className="text-[18px] leading-5 font-bold text-[#5c8bdb]">Monthly Reached</h2>
                        <div className="flex h-[347px] gap-[2px]">
                            <div className="min-w-0 flex-1 overflow-hidden">
                                <ReachTable rows={MONTHLY} stateWidth="w-[170px]" orgWidth="w-[191px]" peopleWidth="w-[85px]" />
                            </div>
                            <div className="mt-2 h-[176px] w-[7px] rounded-full bg-[#adadad]" />
                        </div>
                        <div className="mt-px mr-5 h-[11px] rounded-full bg-[#adadad]" />
                    </Panel>

                    <Panel className="mt-[14px] h-[494px] pt-[3px] pr-[9px] pl-[9px]">
                        <h2 className="text-[18px] leading-5 font-bold text-[#5c8bdb]">Cumulative Reached</h2>
                        <div className="flex h-[465px] gap-[2px]">
                            <div className="min-w-0 flex-1 overflow-hidden">
                                <ReachTable rows={CUMULATIVE} stateWidth="w-[164px]" orgWidth="w-[190px]" peopleWidth="w-[94px]" />
                            </div>
                            <div className="mt-2 h-[257px] w-[7px] rounded-full bg-[#adadad]" />
                        </div>
                    </Panel>
                </div>

                {/* Map and chart */}
                <div className="min-w-0 pt-[14px] pl-[3px]">
                    <div className="grid grid-cols-[230fr_455fr] gap-[14px] pr-[2px]">
                        <Dropdown id="state" label="State" value="All" />
                        <Dropdown id="locality" label="Locality" value="All" />
                    </div>

                    <section className="mt-[25px] mr-[3px] overflow-hidden rounded-[8px] border border-[#c6c6c6] bg-[#e6e6e6] shadow-[4px_2px_16px_rgba(0,0,0,0.12)]">
                        <h2 className="h-8 pl-px text-[18px] leading-8 font-bold text-[#5c8bdb]">People Reached</h2>
                        <SudanMap />
                    </section>

                    <Panel className="mt-[9px] h-[261px] pt-[5px]">
                        <h2 className="pl-[7px] text-[18px] leading-5 font-bold text-[#5c8bdb]">People Reached and Cash Disbursed</h2>
                        <div className="mt-[10px]">
                            <ComboChart />
                        </div>
                    </Panel>
                </div>
            </main>

            <footer className="mr-[17px] flex h-[42px] items-center border-t-2 border-[#8eaadb] pt-[10px] pl-[11px] text-[14px] leading-5 whitespace-nowrap text-[#333]">
                <span><b>Updated</b>: 17 September 2025</span>
                <span className="ml-4"><b>Sources</b>: Cash Working Group Partners</span>
                <span className="ml-[10px]"><b>Feedback:</b> <a href="mailto:ocahsudan_feedback@un.org">ocahsudan_feedback@un.org</a></span>
                <a href="https://www.unocha.org" className="ml-4">www.unocha.org</a>
                <a href="https://www.reliefweb.int" className="ml-4">www.reliefweb.int</a>
                <span className="ml-6 text-[#666]">
                    <span className="text-[#333]">Note:</span> the exchange rate applied to convert the transfer value from SDG to USD Bank of Khartoum. Also visit:{' '}
                    <a href="#presence" className="underline">SUDAN Humanitarian Operational Presence.</a>
                </span>
            </footer>
        </div>
    );
}
